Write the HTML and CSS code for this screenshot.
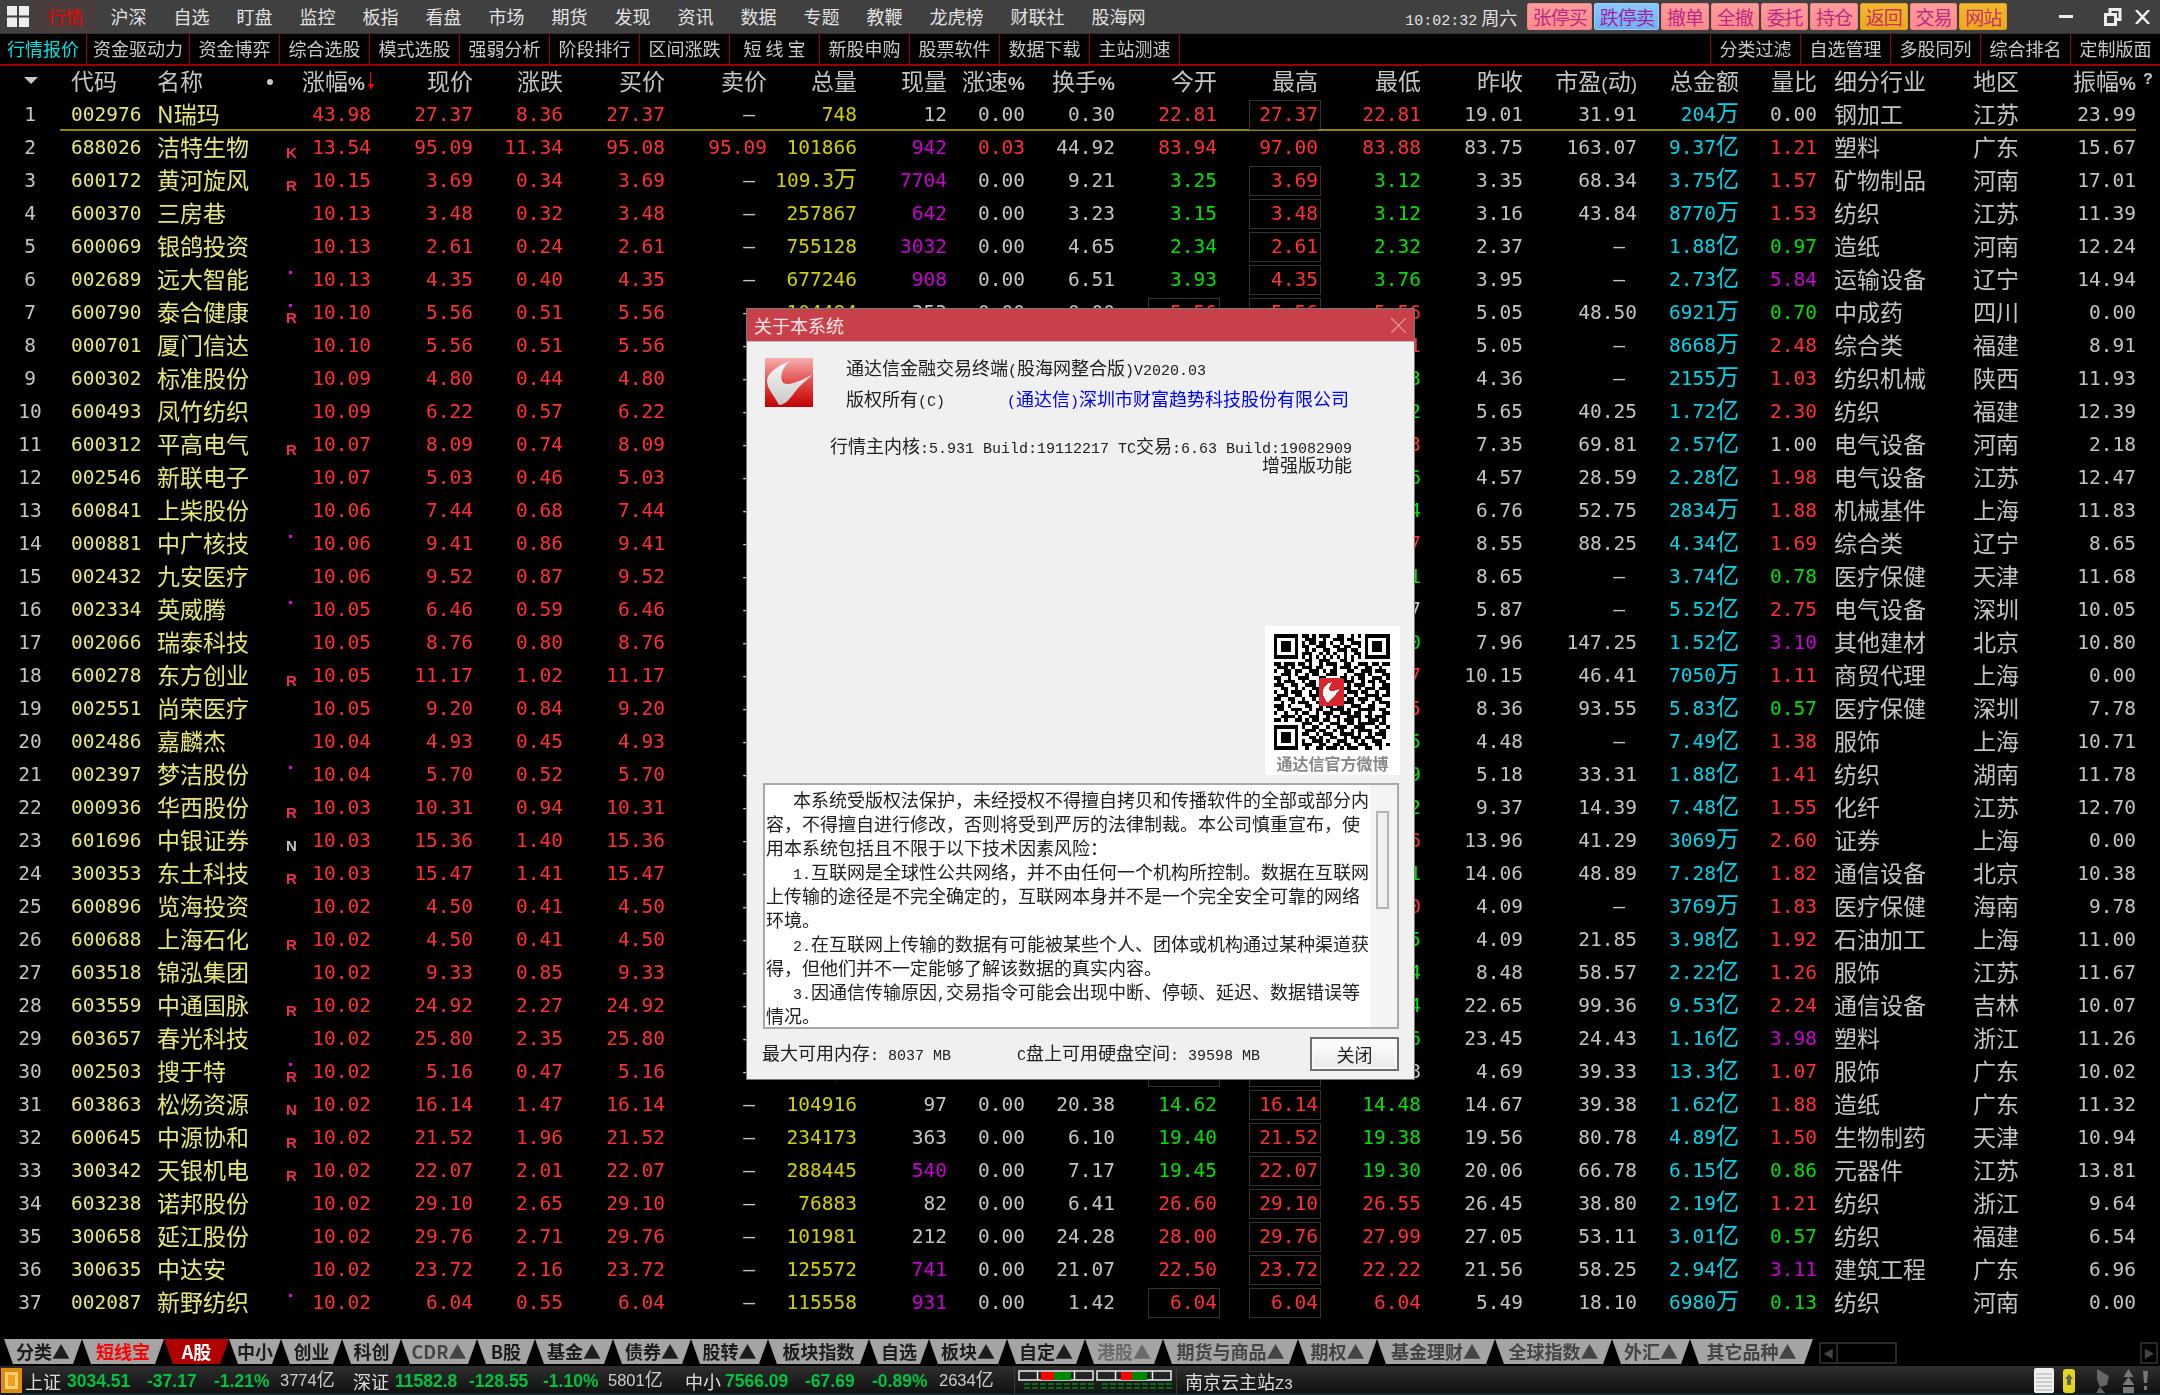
FILE: index.html
```html
<!DOCTYPE html>
<html lang="zh-CN">
<head>
<meta charset="utf-8">
<title>通达信金融交易终端</title>
<link rel="stylesheet" href="styles.css">
</head>
<body>
<div class="app">
<header class="topbar">
  <svg class="grid-ico" width="22" height="21" viewBox="0 0 22 21"><path fill="#eee" d="M0 0h10v9.500H0zM12 0h10v9.500H12zM0 11.500h10V21H0zM12 11.500h10V21H12z"/></svg>
  <nav class="menu">
    <a class="on">行情</a><a>沪深</a><a>自选</a><a>盯盘</a><a>监控</a><a>板指</a><a>看盘</a><a>市场</a><a>期货</a><a>发现</a><a>资讯</a><a>数据</a><a>专题</a><a>教鞭</a><a class="w3">龙虎榜</a><a class="w3">财联社</a><a class="w3">股海网</a>
  </nav>
  <div class="clock"><span class="asc">10:02:32</span> 周六</div>
  <div class="tbtns">
    <a class="lg">张停买</a><a class="lg bl">跌停卖</a><a>撤单</a><a>全撤</a><a>委托</a><a>持仓</a><a class="gd">返回</a><a>交易</a><a class="gd">网站</a>
  </div>
  <div class="winbtns">
    <svg width="14" height="4" viewBox="0 0 14 4"><rect width="14" height="3" fill="#eee"/></svg>
    <svg width="18" height="18" viewBox="0 0 18 18"><path fill="none" stroke="#eee" stroke-width="3" d="M6 5V1.500h10v10h-4M1.500 6.500h10v10h-10z"/></svg>
    <svg width="15" height="14" viewBox="0 0 15 14"><path fill="none" stroke="#eee" stroke-width="2.500" d="M1 0l13 14M14 0L1 14"/></svg>
  </div>
</header>
<div class="subbar">
  <a class="on">行情报价</a><a class="w5">资金驱动力</a><a>资金博弈</a><a>综合选股</a><a>模式选股</a><a>强弱分析</a><a>阶段排行</a><a>区间涨跌</a><a>短 线 宝</a><a>新股申购</a><a>股票软件</a><a>数据下载</a><a>主站测速</a>
  <div class="subright"><a>分类过滤</a><a>自选管理</a><a>多股同列</a><a>综合排名</a><a>定制版面</a></div>
</div>
<main class="quotes">
<table>
<colgroup><col><col><col><col><col><col><col><col><col><col><col><col><col><col><col><col><col><col><col><col><col><col><col><col></colgroup>
<thead><tr><th class="tri"><th>代码<th>名称<th class="hdot"><th class="sort">涨幅<b>%</b><th>现价<th>涨跌<th>买价<th>卖价<th>总量<th>现量<th>涨速<b>%</b><th>换手<b>%</b><th>今开<th>最高<th>最低<th>昨收<th>市盈<s>(</s>动<s>)</s><th>总金额<th>量比<th>细分行业<th>地区<th>振幅<b>%</b><th class="q">?</tr></thead>
<tbody>
<tr class="first"><td>1<td>002976<td>N瑞玛<td><td>43.98<td>27.37<td>8.36<td>27.37<td class="z">—<td>748<td>12<td>0.00<td>0.30<td class="r">22.81<td class="r bx">27.37<td class="r">22.81<td>19.01<td>31.91<td>204<u>万</u><td>0.00<td>钢加工<td>江苏<td>23.99<td></tr>
<tr><td>2<td>688026<td>洁特生物<td class="mk">K<td>13.54<td>95.09<td>11.34<td>95.08<td>95.09<td>101866<td class="m">942<td class="r">0.03<td>44.92<td class="r">83.94<td class="r">97.00<td class="r">83.88<td>83.75<td>163.07<td>9.37<u>亿</u><td class="r">1.21<td>塑料<td>广东<td>15.67<td></tr>
<tr><td>3<td>600172<td>黄河旋风<td class="mk">R<td>10.15<td>3.69<td>0.34<td>3.69<td class="z">—<td>109.3<u>万</u><td class="m">7704<td>0.00<td>9.21<td class="g">3.25<td class="r bx">3.69<td class="g">3.12<td>3.35<td>68.34<td>3.75<u>亿</u><td class="r">1.57<td>矿物制品<td>河南<td>17.01<td></tr>
<tr><td>4<td>600370<td>三房巷<td><td>10.13<td>3.48<td>0.32<td>3.48<td class="z">—<td>257867<td class="m">642<td>0.00<td>3.23<td class="g">3.15<td class="r bx">3.48<td class="g">3.12<td>3.16<td>43.84<td>8770<u>万</u><td class="r">1.53<td>纺织<td>江苏<td>11.39<td></tr>
<tr><td>5<td>600069<td>银鸽投资<td><td>10.13<td>2.61<td>0.24<td>2.61<td class="z">—<td>755128<td class="m">3032<td>0.00<td>4.65<td class="g">2.34<td class="r bx">2.61<td class="g">2.32<td>2.37<td class="z">—<td>1.88<u>亿</u><td class="g">0.97<td>造纸<td>河南<td>12.24<td></tr>
<tr><td>6<td>002689<td>远大智能<td class="dt"><td>10.13<td>4.35<td>0.40<td>4.35<td class="z">—<td>677246<td class="m">908<td>0.00<td>6.51<td class="g">3.93<td class="r bx">4.35<td class="g">3.76<td>3.95<td class="z">—<td>2.73<u>亿</u><td class="m">5.84<td>运输设备<td>辽宁<td>14.94<td></tr>
<tr><td>7<td>600790<td>泰合健康<td class="mk dt">R<td>10.10<td>5.56<td>0.51<td>5.56<td class="z">—<td>104484<td>353<td>0.00<td>0.00<td class="r bx ob">5.56<td class="r bx">5.56<td class="r">5.56<td>5.05<td>48.50<td>6921<u>万</u><td class="g">0.70<td>中成药<td>四川<td>0.00<td></tr>
<tr><td>8<td>000701<td>厦门信达<td><td>10.10<td>5.56<td>0.51<td>5.56<td class="z">—<td><td><td><td><td><td><td class="r">5.11<td>5.05<td class="z">—<td>8668<u>万</u><td class="r">2.48<td>综合类<td>福建<td>8.91<td></tr>
<tr><td>9<td>600302<td>标准股份<td><td>10.09<td>4.80<td>0.44<td>4.80<td class="z">—<td><td><td><td><td><td><td class="g">4.33<td>4.36<td class="z">—<td>2155<u>万</u><td class="r">1.03<td>纺织机械<td>陕西<td>11.93<td></tr>
<tr><td>10<td>600493<td>凤竹纺织<td><td>10.09<td>6.22<td>0.57<td>6.22<td class="z">—<td><td><td><td><td><td><td class="g">5.62<td>5.65<td>40.25<td>1.72<u>亿</u><td class="r">2.30<td>纺织<td>福建<td>12.39<td></tr>
<tr><td>11<td>600312<td>平高电气<td class="mk">R<td>10.07<td>8.09<td>0.74<td>8.09<td class="z">—<td><td><td><td><td><td><td class="r">7.43<td>7.35<td>69.81<td>2.57<u>亿</u><td>1.00<td>电气设备<td>河南<td>2.18<td></tr>
<tr><td>12<td>002546<td>新联电子<td><td>10.07<td>5.03<td>0.46<td>5.03<td class="z">—<td><td><td><td><td><td><td class="g">4.46<td>4.57<td>28.59<td>2.28<u>亿</u><td class="r">1.98<td>电气设备<td>江苏<td>12.47<td></tr>
<tr><td>13<td>600841<td>上柴股份<td><td>10.06<td>7.44<td>0.68<td>7.44<td class="z">—<td><td><td><td><td><td><td class="g">6.64<td>6.76<td>52.75<td>2834<u>万</u><td class="r">1.88<td>机械基件<td>上海<td>11.83<td></tr>
<tr><td>14<td>000881<td>中广核技<td class="dt"><td>10.06<td>9.41<td>0.86<td>9.41<td class="z">—<td><td><td><td><td><td><td class="r">8.67<td>8.55<td>88.25<td>4.34<u>亿</u><td class="r">1.69<td>综合类<td>辽宁<td>8.65<td></tr>
<tr><td>15<td>002432<td>九安医疗<td><td>10.06<td>9.52<td>0.87<td>9.52<td class="z">—<td><td><td><td><td><td><td class="g">8.51<td>8.65<td class="z">—<td>3.74<u>亿</u><td class="g">0.78<td>医疗保健<td>天津<td>11.68<td></tr>
<tr><td>16<td>002334<td>英威腾<td class="dt"><td>10.05<td>6.46<td>0.59<td>6.46<td class="z">—<td><td><td><td><td><td><td>5.87<td>5.87<td class="z">—<td>5.52<u>亿</u><td class="r">2.75<td>电气设备<td>深圳<td>10.05<td></tr>
<tr><td>17<td>002066<td>瑞泰科技<td><td>10.05<td>8.76<td>0.80<td>8.76<td class="z">—<td><td><td><td><td><td><td class="g">7.90<td>7.96<td>147.25<td>1.52<u>亿</u><td class="m">3.10<td>其他建材<td>北京<td>10.80<td></tr>
<tr><td>18<td>600278<td>东方创业<td class="mk">R<td>10.05<td>11.17<td>1.02<td>11.17<td class="z">—<td><td><td><td><td><td><td class="r">11.17<td>10.15<td>46.41<td>7050<u>万</u><td class="r">1.11<td>商贸代理<td>上海<td>0.00<td></tr>
<tr><td>19<td>002551<td>尚荣医疗<td><td>10.05<td>9.20<td>0.84<td>9.20<td class="z">—<td><td><td><td><td><td><td class="r">8.55<td>8.36<td>93.55<td>5.83<u>亿</u><td class="g">0.57<td>医疗保健<td>深圳<td>7.78<td></tr>
<tr><td>20<td>002486<td>嘉麟杰<td><td>10.04<td>4.93<td>0.45<td>4.93<td class="z">—<td><td><td><td><td><td><td class="g">4.45<td>4.48<td class="z">—<td>7.49<u>亿</u><td class="r">1.38<td>服饰<td>上海<td>10.71<td></tr>
<tr><td>21<td>002397<td>梦洁股份<td class="dt"><td>10.04<td>5.70<td>0.52<td>5.70<td class="z">—<td><td><td><td><td><td><td class="g">5.09<td>5.18<td>33.31<td>1.88<u>亿</u><td class="r">1.41<td>纺织<td>湖南<td>11.78<td></tr>
<tr><td>22<td>000936<td>华西股份<td class="mk">R<td>10.03<td>10.31<td>0.94<td>10.31<td class="z">—<td><td><td><td><td><td><td class="g">9.22<td>9.37<td>14.39<td>7.48<u>亿</u><td class="r">1.55<td>化纤<td>江苏<td>12.70<td></tr>
<tr><td>23<td>601696<td>中银证券<td class="mk nn">N<td>10.03<td>15.36<td>1.40<td>15.36<td class="z">—<td><td><td><td><td><td><td class="r">15.36<td>13.96<td>41.29<td>3069<u>万</u><td class="r">2.60<td>证券<td>上海<td>0.00<td></tr>
<tr><td>24<td>300353<td>东土科技<td class="mk">R<td>10.03<td>15.47<td>1.41<td>15.47<td class="z">—<td><td><td><td><td><td><td class="g">13.91<td>14.06<td>48.89<td>7.28<u>亿</u><td class="r">1.82<td>通信设备<td>北京<td>10.38<td></tr>
<tr><td>25<td>600896<td>览海投资<td><td>10.02<td>4.50<td>0.41<td>4.50<td class="z">—<td><td><td><td><td><td><td class="r">4.50<td>4.09<td class="z">—<td>3769<u>万</u><td class="r">1.83<td>医疗保健<td>海南<td>9.78<td></tr>
<tr><td>26<td>600688<td>上海石化<td class="mk">R<td>10.02<td>4.50<td>0.41<td>4.50<td class="z">—<td><td><td><td><td><td><td class="g">4.05<td>4.09<td>21.85<td>3.98<u>亿</u><td class="r">1.92<td>石油加工<td>上海<td>11.00<td></tr>
<tr><td>27<td>603518<td>锦泓集团<td><td>10.02<td>9.33<td>0.85<td>9.33<td class="z">—<td><td><td><td><td><td><td class="g">8.34<td>8.48<td>58.57<td>2.22<u>亿</u><td class="r">1.26<td>服饰<td>江苏<td>11.67<td></tr>
<tr><td>28<td>603559<td>中通国脉<td class="mk">R<td>10.02<td>24.92<td>2.27<td>24.92<td class="z">—<td><td><td><td><td><td><td class="g">22.64<td>22.65<td>99.36<td>9.53<u>亿</u><td class="r">2.24<td>通信设备<td>吉林<td>10.07<td></tr>
<tr><td>29<td>603657<td>春光科技<td><td>10.02<td>25.80<td>2.35<td>25.80<td class="z">—<td><td><td><td><td><td><td class="g">23.16<td>23.45<td>24.43<td>1.16<u>亿</u><td class="m">3.98<td>塑料<td>浙江<td>11.26<td></tr>
<tr><td>30<td>002503<td>搜于特<td class="mk dt">R<td>10.02<td>5.16<td>0.47<td>5.16<td class="z">—<td>87.5<u>万</u><td><td><td><td class="bx ob"><td class="bx"><td>4.68<td>4.69<td>39.33<td>13.3<u>亿</u><td class="r">1.07<td>服饰<td>广东<td>10.02<td></tr>
<tr><td>31<td>603863<td>松炀资源<td class="mk">N<td>10.02<td>16.14<td>1.47<td>16.14<td class="z">—<td>104916<td>97<td>0.00<td>20.38<td class="g">14.62<td class="r bx">16.14<td class="g">14.48<td>14.67<td>39.38<td>1.62<u>亿</u><td class="r">1.88<td>造纸<td>广东<td>11.32<td></tr>
<tr><td>32<td>600645<td>中源协和<td class="mk">R<td>10.02<td>21.52<td>1.96<td>21.52<td class="z">—<td>234173<td>363<td>0.00<td>6.10<td class="g">19.40<td class="r bx">21.52<td class="g">19.38<td>19.56<td>80.78<td>4.89<u>亿</u><td class="r">1.50<td>生物制药<td>天津<td>10.94<td></tr>
<tr><td>33<td>300342<td>天银机电<td class="mk">R<td>10.02<td>22.07<td>2.01<td>22.07<td class="z">—<td>288445<td class="m">540<td>0.00<td>7.17<td class="g">19.45<td class="r bx">22.07<td class="g">19.30<td>20.06<td>66.78<td>6.15<u>亿</u><td class="g">0.86<td>元器件<td>江苏<td>13.81<td></tr>
<tr><td>34<td>603238<td>诺邦股份<td><td>10.02<td>29.10<td>2.65<td>29.10<td class="z">—<td>76883<td>82<td>0.00<td>6.41<td class="r">26.60<td class="r bx">29.10<td class="r">26.55<td>26.45<td>38.80<td>2.19<u>亿</u><td class="r">1.21<td>纺织<td>浙江<td>9.64<td></tr>
<tr><td>35<td>300658<td>延江股份<td><td>10.02<td>29.76<td>2.71<td>29.76<td class="z">—<td>101981<td>212<td>0.00<td>24.28<td class="r">28.00<td class="r bx">29.76<td class="r">27.99<td>27.05<td>53.11<td>3.01<u>亿</u><td class="g">0.57<td>纺织<td>福建<td>6.54<td></tr>
<tr><td>36<td>300635<td>中达安<td><td>10.02<td>23.72<td>2.16<td>23.72<td class="z">—<td>125572<td class="m">741<td>0.00<td>21.07<td class="r">22.50<td class="r bx">23.72<td class="r">22.22<td>21.56<td>58.25<td>2.94<u>亿</u><td class="m">3.11<td>建筑工程<td>广东<td>6.96<td></tr>
<tr><td>37<td>002087<td>新野纺织<td class="dt"><td>10.02<td>6.04<td>0.55<td>6.04<td class="z">—<td>115558<td class="m">931<td>0.00<td>1.42<td class="r bx ob">6.04<td class="r bx">6.04<td class="r">6.04<td>5.49<td>18.10<td>6980<u>万</u><td class="g">0.13<td>纺织<td>河南<td>0.00<td></tr>
</tbody>
</table>
</main>
<div class="tabs">
  <a>分类▲</a><a class="hot">短线宝</a><a class="act">A股</a><a>中小</a><a>创业</a><a>科创</a><a class="dim">CDR▲</a><a>B股</a><a>基金▲</a><a>债券▲</a><a>股转▲</a><a>板块指数</a><a>自选</a><a>板块▲</a><a>自定▲</a><a class="dim2">港股▲</a><a class="dim">期货与商品▲</a><a class="dim">期权▲</a><a class="dim">基金理财▲</a><a class="dim">全球指数▲</a><a class="dim">外汇▲</a><a class="dim">其它品种▲</a>
  <div class="hscroll"><span class="ar">◀</span><span class="th"></span></div>
  <div class="hscroll end"><span class="ar">▶</span></div>
</div>
<footer class="status">
  <span class="sq"></span><span class="cn">上证</span><span class="gn">3034.51</span><span class="gn">-37.17</span><span class="gn">-1.21%</span><span class="amt">3774<i>亿</i></span>
  <span class="cn">深证</span><span class="gn">11582.8</span><span class="gn">-128.55</span><span class="gn">-1.10%</span><span class="amt">5801<i>亿</i></span>
  <span class="cn">中小</span><span class="gn">7566.09</span><span class="gn">-67.69</span><span class="gn">-0.89%</span><span class="amt">2634<i>亿</i></span>
  <div class="meter">
    <svg width="155" height="20" viewBox="0 0 155 20">
      <g fill="none" stroke="#eee" stroke-width="1.500"><path d="M1 1h74v9H1zM19.500 1v9M38 1v9M56.500 1v9M79 1h74v9H79zM97.500 1v9M116 1v9M134.500 1v9"/></g>
      <path fill="#f00" d="M23 2h13v8H23zM103 2h11v8h-11z"/><path fill="#080" d="M36 2h17v8H36zM114 2h15v8h-15z"/>
      <path stroke="#0a6a1a" stroke-width="2" stroke-dasharray="6 2" d="M6 14h70M84 14h70M6 18h70M84 18h70"/>
    </svg>
  </div>
  <span class="cn site">南京云主站<small>Z3</small></span>
  <div class="sicons">
    <svg width="21" height="26" viewBox="0 0 21 26"><rect width="20" height="25" rx="2" fill="#eee"/><path stroke="#aaa" d="M2 6h16M2 10h16M2 14h16M2 18h16M2 22h16"/></svg>
    <svg width="13" height="24" viewBox="0 0 13 24"><rect width="12" height="24" rx="3" fill="#e0d820"/><path fill="#665" d="M6 5l4 5H8v6H4v-6H2z"/></svg>
    <svg width="16" height="26" viewBox="0 0 16 26"><path fill="#666" d="M3 1l12 7-2 9-7 2-3-8zM6 19l-4 6h9z"/></svg>
    <svg width="13" height="24" viewBox="0 0 13 24"><path fill="#777" d="M6.500 0l5 8h-10zM6.500 8l6 8H.5zM1 18h11v6H1z"/></svg>
    <svg width="5" height="20" viewBox="0 0 5 20"><path fill="#777" d="M0 0h5l-1 12H1zM1 15h3v4H1z"/></svg>
  </div>
</footer>
<section class="dlg">
  <div class="dlg-title"><span>关于本系统</span>
    <svg width="15" height="15" viewBox="0 0 15 15"><path fill="none" stroke="#e8a0a0" stroke-width="1.200" d="M0 0l15 15M15 0L0 15"/></svg>
  </div>
  <div class="intro">
    <svg class="logo" width="48" height="49" viewBox="0 0 48 49">
      <defs><linearGradient id="lr" x1="0" y1="0" x2="0" y2="1"><stop offset="0" stop-color="#f6b0ae"/><stop offset=".55" stop-color="#e04040"/><stop offset="1" stop-color="#c00000"/></linearGradient>
      <linearGradient id="lw" x1="0" y1="0" x2="0" y2="1"><stop offset="0" stop-color="#fafafa"/><stop offset="1" stop-color="#c8c8c8"/></linearGradient></defs>
      <rect width="48" height="49" fill="url(#lr)"/>
      <path fill="url(#lw)" d="M25 3C12 8 2 15 2 23c0 7 6 13 12 24 8 0 14-11 19-17 5-5 11-10 14-13-7 3-17 9-25 9-8 0-8-14 3-23z"/>
    </svg>
    <div class="itext">
      <p>通达信金融交易终端<span class="asc">(</span>股海网整合版<span class="asc">)V2020.03</span></p>
      <p class="cr"><span class="crl">版权所有<span class="asc">(C)</span></span><a class="lnk"><span class="asc">(</span>通达信<span class="asc">)</span>深圳市财富趋势科技股份有限公司</a></p>
    </div>
  </div>
  <div class="build">
    <p>行情主内核<span class="asc">:5.931 Build:19112217 TC</span>交易<span class="asc">:6.63 Build:19082909</span></p>
    <p>增强版功能</p>
  </div>
  <div class="qr">
    <div class="qrbox">
      <svg width="117" height="116" viewBox="0 0 33 33" shape-rendering="crispEdges">
        <path fill-rule="evenodd" d="M0 0h7v7H0zM1 1v5h5V1zM2 2h3v3H2zM26 0h7v7h-7zM27 1v5h5V1zM28 2h3v3h-3zM0 26h7v7H0zM1 27v5h5v-5zM2 28h3v3H2z"/>
        <path stroke="#000" d="M8 .5h2M11 .5h1M13 .5h3M18 .5h2M22 .5h1M24 .5h1M9 1.500h3M14 1.500h1M17 1.500h3M21 1.500h2M8 2.500h1M10 2.500h2M13 2.500h2M16 2.500h1M19 2.500h1M22 2.500h3M8 3.500h2M12 3.500h3M17 3.500h2M20 3.500h2M24 3.500h1M9 4.500h1M11 4.500h1M14 4.500h2M18 4.500h3M22 4.500h2M8 5.500h3M13 5.500h1M15 5.500h1M17 5.500h1M20 5.500h1M23 5.500h2M8 6.500h1M10 6.500h1M12 6.500h1M14 6.500h1M16 6.500h1M18 6.500h1M20 6.500h1M22 6.500h1M24 6.500h1M9 7.500h2M13 7.500h3M19 7.500h2M22 7.500h1M0 8.500h2M3 8.500h3M7 8.500h2M10 8.500h1M13 8.500h1M15 8.500h3M20 8.500h2M24 8.500h3M28 8.500h2M31 8.500h2M1 9.500h3M5 9.500h1M8 9.500h3M12 9.500h2M17 9.500h1M19 9.500h3M23 9.500h1M26 9.500h2M30 9.500h1M0 10.500h1M3 10.500h2M6 10.500h2M10 10.500h3M14 10.500h1M16 10.500h2M21 10.500h2M25 10.500h3M29 10.500h3M2 11.500h3M6 11.500h1M9 11.500h1M11 11.500h2M15 11.500h3M20 11.500h1M23 11.500h3M27 11.500h1M31 11.500h2M0 12.500h2M4 12.500h1M7 12.500h3M13 12.500h2M19 12.500h2M22 12.500h1M24 12.500h2M28 12.500h3M32 12.500h1M1 13.500h1M3 13.500h3M8 13.500h1M10 13.500h2M20 13.500h3M25 13.500h1M27 13.500h2M30 13.500h2M0 14.500h3M5 14.500h2M9 14.500h3M21 14.500h1M23 14.500h3M28 14.500h1M31 14.500h2M2 15.500h2M6 15.500h1M8 15.500h1M11 15.500h2M20 15.500h2M24 15.500h1M26 15.500h3M30 15.500h3M0 16.500h1M3 16.500h1M5 16.500h3M10 16.500h1M12 16.500h1M21 16.500h3M25 16.500h2M29 16.500h1M32 16.500h1M1 17.500h3M6 17.500h2M10 17.500h3M20 17.500h1M23 17.500h1M26 17.500h4M31 17.500h2M0 18.500h2M4 18.500h2M8 18.500h1M11 18.500h1M13 18.500h1M21 18.500h2M24 18.500h3M29 18.500h2M2 19.500h1M5 19.500h1M7 19.500h3M12 19.500h3M19 19.500h4M25 19.500h1M28 19.500h1M30 19.500h3M0 20.500h3M4 20.500h1M9 20.500h2M13 20.500h1M15 20.500h2M18 20.500h2M22 20.500h3M27 20.500h2M32 20.500h1M1 21.500h2M5 21.500h3M10 21.500h1M12 21.500h2M16 21.500h4M21 21.500h1M24 21.500h5M30 21.500h2M0 22.500h1M3 22.500h1M6 22.500h1M8 22.500h2M12 22.500h1M14 22.500h3M19 22.500h3M23 22.500h2M27 22.500h1M31 22.500h2M2 23.500h4M7 23.500h1M10 23.500h3M15 23.500h1M17 23.500h2M21 23.500h4M26 23.500h2M29 23.500h3M0 24.500h2M3 24.500h1M6 24.500h2M9 24.500h1M11 24.500h2M14 24.500h2M18 24.500h1M20 24.500h3M24 24.500h1M27 24.500h3M31 24.500h1M8 25.500h3M13 25.500h1M16 25.500h3M21 25.500h2M24 25.500h5M30 25.500h2M8 26.500h1M11 26.500h2M15 26.500h1M18 26.500h3M23 26.500h2M25 26.500h1M29 26.500h1M32 26.500h1M9 27.500h3M13 27.500h2M17 27.500h1M19 27.500h1M22 27.500h1M24 27.500h4M30 27.500h2M8 28.500h2M12 28.500h1M14 28.500h3M19 28.500h4M24 28.500h1M27 28.500h1M29 28.500h3M10 29.500h2M13 29.500h1M16 29.500h2M20 29.500h1M22 29.500h3M26 29.500h3M31 29.500h1M8 30.500h1M11 30.500h3M15 30.500h1M18 30.500h3M23 30.500h1M25 30.500h1M28 30.500h3M8 31.500h3M13 31.500h2M17 31.500h2M20 31.500h2M24 31.500h3M29 31.500h2M32 31.500h1M9 32.500h1M12 32.500h2M15 32.500h3M19 32.500h1M21 32.500h3M26 32.500h2M30 32.500h1"/>
        <rect x="13" y="12.500" width="7" height="8" rx=".6" fill="#d8262e"/>
        <path fill="#f4f4f4" d="M17 13.500c-2 .6-3 1.800-3 3 0 1 .8 2 1 3 1.500 0 3-3 4-4-1 .5-2.500 1-3 .8-.4-.6 0-2 1-2.800z"/>
      </svg>
      <p>通达信官方微博</p>
    </div>
  </div>
  <div class="legal">
    <div class="legal-text">
      <p>本系统受版权法保护，未经授权不得擅自拷贝和传播软件的全部或部分内<br>容，不得擅自进行修改，否则将受到严厉的法律制裁。本公司慎重宣布，使<br>用本系统包括且不限于以下技术因素风险：</p>
      <p><span class="asc">1.</span>互联网是全球性公共网络，并不由任何一个机构所控制。数据在互联网<br>上传输的途径是不完全确定的，互联网本身并不是一个完全安全可靠的网络<br>环境。</p>
      <p><span class="asc">2.</span>在互联网上传输的数据有可能被某些个人、团体或机构通过某种渠道获<br>得，但他们并不一定能够了解该数据的真实内容。</p>
      <p><span class="asc">3.</span>因通信传输原因<span class="asc">,</span>交易指令可能会出现中断、停顿、延迟、数据错误等<br>情况。</p>
    </div>
    <div class="vscroll"><span></span></div>
  </div>
  <div class="dlg-foot">
    <span class="mem">最大可用内存<span class="asc">: 8037 MB</span></span>
    <span class="disk"><span class="asc">C</span>盘上可用硬盘空间<span class="asc">: 39598 MB</span></span>
    <button class="close">关闭</button>
  </div>
</section>
</div>
</body>
</html>
```
FILE: styles.css
```css
* { box-sizing: border-box; }
html, body { margin: 0; padding: 0; background: #000; }
body { width: 2160px; height: 1395px; overflow: hidden; font-family: "Noto Sans CJK SC", sans-serif; }
a { text-decoration: none; color: inherit; }
p { margin: 0; }
.app { position: relative; width: 2160px; height: 1395px; display: flex; flex-direction: column; filter: blur(.3px); }
.asc { font-family: "Liberation Mono", monospace; font-size: 15px; line-height: 0; }

/* top bar */
.topbar { height: 34px; background: #404040; border-bottom: 1px solid #333; display: flex; align-items: center; color: #e0e0e0; font-size: 18px; }
.grid-ico { margin-left: 7px; flex: none; }
.menu { display: flex; margin-left: 5px; height: 33px; }
.menu a { width: 63px; text-align: center; line-height: 33px; }
.menu a.w3 { width: 81px; }
.menu a.on { color: #f00000; background: #4a3d3d; }
.clock { margin-left: auto; white-space: nowrap; }
.tbtns { display: grid; grid-template-columns: 65px 65px repeat(7, 47.700px); column-gap: 2px; margin-left: 10px; }
.tbtns a { height: 27px; line-height: 26px; text-align: center; color: #b82c84; background: linear-gradient(#ff9c9c, #ff8a8a); border: 1px solid #e88; border-radius: 2px; font-size: 19px; letter-spacing: -1px; }
.tbtns a.bl { background: linear-gradient(#8cc8ff, #70b0f0); border-color: #9cf; color: #a020a0; }
.tbtns a.gd { background: linear-gradient(#f4b830, #eca818); border-color: #e0a020; color: #c83070; }
.winbtns { display: flex; align-items: center; gap: 13px; margin-left: 52px; margin-right: 10px; }
.winbtns svg:first-child { margin-right: 18px; }

/* sub tabs */
.subbar { height: 32px; background: #000; border-bottom: 2px solid #900; display: flex; color: #c8c8c8; font-size: 18px; line-height: 29px; }
.subbar a { width: 90px; text-align: center; border-right: 1px solid #900; white-space: pre; }
.subbar a.on { width: 87px; color: #00e0e0; }
.subbar a.w5 { width: 103px; }
.subright { margin-left: auto; display: flex; }
.subright a { width: 90px; border-right: 0; border-left: 1px solid #900; }

/* table */
.quotes { flex: 1; min-height: 0; }
table { table-layout: fixed; border-collapse: separate; border-spacing: 0; width: 2160px; }
col:nth-child(1) { width: 60px; } col:nth-child(2) { width: 97px; } col:nth-child(3) { width: 125px; } col:nth-child(4) { width: 16px; }
col:nth-child(5) { width: 73px; } col:nth-child(6) { width: 102px; } col:nth-child(7) { width: 90px; } col:nth-child(8) { width: 102px; }
col:nth-child(9) { width: 102px; } col:nth-child(10) { width: 90px; } col:nth-child(11) { width: 90px; } col:nth-child(12) { width: 78px; }
col:nth-child(13) { width: 90px; } col:nth-child(14) { width: 102px; } col:nth-child(15) { width: 101px; } col:nth-child(16) { width: 103px; }
col:nth-child(17) { width: 102px; } col:nth-child(18) { width: 114px; } col:nth-child(19) { width: 102px; } col:nth-child(20) { width: 78px; }
col:nth-child(21) { width: 156px; } col:nth-child(22) { width: 90px; } col:nth-child(23) { width: 73px; } col:nth-child(24) { width: 24px; }
th, td { padding: 0; text-align: right; white-space: nowrap; color: #c4c4c4; position: relative; }
th { height: 32px; padding-bottom: 3px; font-size: 23px; font-weight: 400; line-height: 29px; }
th b { font: 700 19px/0 "Liberation Sans", sans-serif; }
th s { text-decoration: none; font: 19px/0 "Liberation Sans", sans-serif; }
th:nth-child(2), th:nth-child(3), td:nth-child(2), td:nth-child(3), th:nth-child(21), th:nth-child(22), td:nth-child(21), td:nth-child(22) { text-align: left; }
th:nth-child(2), td:nth-child(2) { padding-left: 11px; }
th:nth-child(21), td:nth-child(21) { padding-left: 17px; }
th.sort { padding-right: 6px; }
th.sort::after { content: ""; position: absolute; right: 0; top: 6px; width: 1px; height: 14px; background: #f00; }
th.sort::before { content: ""; position: absolute; right: -3px; top: 18px; border: 3.500px solid transparent; border-top: 6px solid #f00; }
th.tri::after { content: ""; position: absolute; left: 24px; top: 11px; border: 7px solid transparent; border-top: 7px solid #c8c8c8; border-bottom: 0; }
th.hdot::before { content: ""; position: absolute; left: -15px; top: 13px; width: 6px; height: 6px; border-radius: 50%; background: #c8c8c8; }
th.q { font: 700 16px/29px "Liberation Mono", monospace; text-align: center; }
td { height: 33px; font: 19.500px/33px "DejaVu Sans Mono", monospace; }
td:nth-child(2), td:nth-child(3) { color: #e6e67a; }
td:nth-child(3), td:nth-child(21), td:nth-child(22) { font: 23px/31px "Noto Sans CJK SC", sans-serif; padding-bottom: 2px; }
td:nth-child(1) { text-align: center; padding-left: 0; }
td:nth-child(5), td:nth-child(6), td:nth-child(7), td:nth-child(8), td:nth-child(9) { color: #ff3030; }
td:nth-child(10) { color: #d0d000; }
td:nth-child(19) { color: #00d4e8; }
td:nth-child(9).z { color: #c4c4c4; }
td.z { padding-right: 12px; }
td.r { color: #ff3030; }
td.g { color: #00e000; }
td.m { color: #c800d0; }
u { text-decoration: none; font: 23px/0 "Noto Sans CJK SC", sans-serif; }
td.mk { font: 700 15px/33px "Liberation Sans", sans-serif; color: #e83050; text-align: left; padding: 10px 0 0 4px; line-height: 23px; }
td.nn { color: #c8c0c0; }
td.dt::after { content: ""; position: absolute; left: 7px; top: 8px; width: 3px; height: 3px; background: #e000e0; }
td.bx::after { content: ""; position: absolute; right: -3px; top: 2px; width: 70px; height: 28px; border: 1px solid #333; }
tr.first td:not(:first-child):not(:last-child) { box-shadow: inset 0 -2px 0 #8c8600; }

/* tab strip */
.tabs { height: 27px; padding: 0 0 2px 4px; display: grid; grid-template-columns: 78px 82px 65px 52px 61px 59px 76px 58px 78px 78px 77px 101px 60px 78px 78px 78px 135px 79px 118px 117px 78px 123px 84px 1fr; background: #000; font-size: 18px; font-weight: 700; }
.tabs > a { height: 25px; line-height: 24px; text-align: center; color: #1c1c1c; background: #a4a4a4; white-space: nowrap; clip-path: polygon(0 0, 100% 0, calc(100% - 9px) 100%, 9px 100%); }
.tabs > a.hot { color: #f00; }
.tabs > a.act { color: #fff; background: #b00000; }
.tabs > a.dim { color: #444; }
.tabs > a.dim2 { color: #6a6a6a; }
.hscroll { margin: 3px 0 0 6px; height: 22px; border: 2px solid #282828; display: flex; color: #444; font-size: 11px; line-height: 18px; }
.hscroll .ar { width: 17px; text-align: center; border-right: 2px solid #282828; }
.hscroll.end { width: 18px; margin-left: auto; margin-right: 2px; }
.hscroll.end .ar { border: 0; width: 14px; }

/* status bar */
.status { height: 29px; border-bottom: 2px solid #14232c; background: linear-gradient(#2e2e2e, #111); display: grid; grid-template-columns: 24px 42px 80px 67px 66px 73px 42px 74px 74px 65px 77px 40px 80px 67px 67px 75px 163px 1fr auto; align-items: center; padding-left: 1px; color: #ddd; font-size: 18px; }
.sq { width: 21px; height: 25px; background: #f0a020; border: 4px solid #e08a10; box-shadow: inset 0 0 0 3px #ffd070; }
.cn { white-space: nowrap; }
.gn { color: #00c040; font: 700 17.500px/27px "Liberation Sans", sans-serif; padding-top: 2px; white-space: nowrap; }
.amt { font: 16.500px/27px "Liberation Sans", sans-serif; color: #ccc; white-space: nowrap; }
.amt i { font: 18px/0 "Noto Sans CJK SC", sans-serif; }
.meter { height: 27px; border-left: 1px solid #3a3a3a; border-right: 1px solid #3a3a3a; padding: 3px 0 0 3px; }
.meter svg { display: block; }
.site { padding-left: 8px; }
.site small { font: 15px "Liberation Mono", monospace; }
.sicons { display: flex; align-items: center; gap: 8px; padding-right: 12px; }
.sicons svg:nth-child(3) { margin-left: 10px; }
.sicons svg:nth-child(4) { margin-left: 4px; }

/* dialog */
.dlg { position: absolute; left: 747px; top: 309px; width: 667px; height: 770px; background: #f0f0f0; box-shadow: 0 0 0 1px #777; display: flex; flex-direction: column; font-size: 18px; color: #202020; }
.dlg-title { height: 33px; flex: none; background: #c8414a; border-bottom: 1px solid #bbb; color: #f4e4e4; display: flex; align-items: center; justify-content: space-between; padding: 0 8px 0 7px; line-height: 31px; }
.intro { display: flex; height: 72px; flex: none; padding: 10px 0 0 18px; }
.logo { margin-top: 6px; flex: none; }
.itext { margin-left: 33px; line-height: 31px; white-space: nowrap; }
.itext p { height: 31px; }
.cr { display: flex; }
.crl { width: 161px; }
.lnk { color: #0000f0; }
.build { margin-top: 22px; padding-right: 62px; text-align: right; line-height: 19px; white-space: nowrap; }
.build p { height: 19px; }
.qr { margin-top: 152px; padding-right: 14px; display: flex; justify-content: flex-end; }
.qrbox { width: 135px; height: 149px; background: #fff; padding: 8px 8px 0; }
.qrbox svg { display: block; }
.qrbox p { margin-top: 1px; font-size: 16px; line-height: 24px; font-weight: 700; color: #888; text-align: center; white-space: nowrap; }
.legal { margin: 8px 15px 0 16px; height: 246px; flex: none; border: 2px solid #a8a8a8; background: #fff; display: flex; overflow: hidden; }
.legal-text { flex: 1; padding: 2px 0 0 1px; font-size: 18px; line-height: 24px; white-space: nowrap; overflow: hidden; }
.legal-text p { text-indent: 27px; }
.vscroll { width: 27px; background: #f4f4f4; padding: 26px 0 0 6px; }
.vscroll span { display: block; width: 13px; height: 98px; border: 2px solid #b4b4b4; background: #f0f0f0; }
.dlg-foot { display: flex; align-items: center; margin-top: 8px; padding: 0 15px 0 15px; height: 34px; white-space: nowrap; }
.mem { width: 255px; padding-bottom: 4px; }
.disk { flex: 1; padding-bottom: 4px; }
.close { width: 89px; height: 34px; font: 18px "Noto Sans CJK SC", sans-serif; padding: 0; color: #202020; background: linear-gradient(#fff, #e8e8e8); border: 2px solid #707070; box-shadow: inset 0 0 0 2px #f8f8f8; }
```
